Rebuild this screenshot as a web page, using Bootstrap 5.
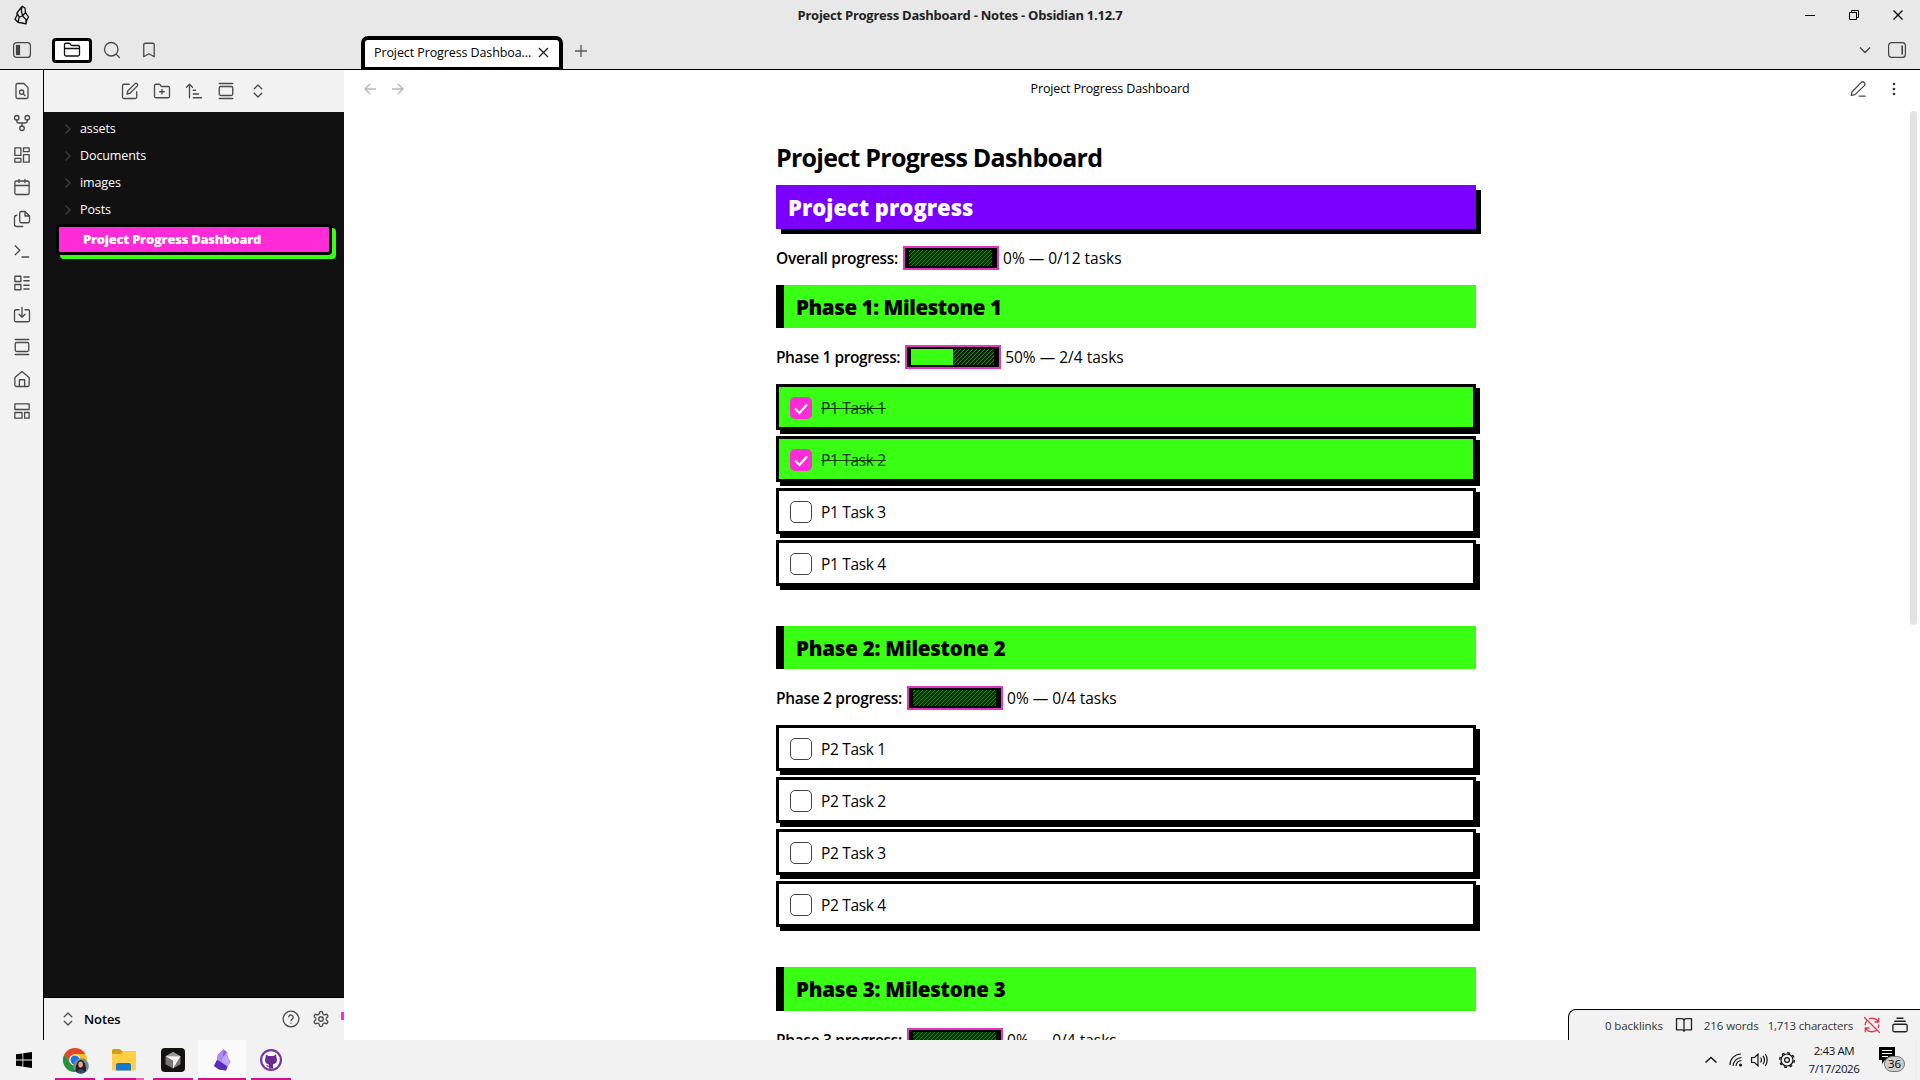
<!DOCTYPE html>
<html lang="en">
<head>
<meta charset="utf-8">
<meta name="viewport" content="width=device-width, initial-scale=1">
<title>Project Progress Dashboard - Notes - Obsidian 1.12.7</title>
<link href="https://cdn.jsdelivr.net/npm/bootstrap@5.3.0/dist/css/bootstrap.min.css" rel="stylesheet">
<style>
:root{--pink:#ff2bd6;--lime:#39ff14;--violet:#7a00ff;--chrome:#e8e8e8;--panel:#f2f2f2}
body{font-family:"Open Sans","Noto Sans",sans-serif;font-size:12.5px;line-height:20px;color:#000;width:1920px;height:1080px;letter-spacing:-.1px}
svg{display:block;flex:none}
.ico{width:18px;height:18px;fill:none;stroke:#4a4a4a;stroke-width:1.75;stroke-linecap:round;stroke-linejoin:round}
.cell32{width:32px;height:32px;display:flex;align-items:center;justify-content:center;flex:none}
.topbar{height:70px;background:var(--chrome);border-bottom:1px solid #000}
.title-row{height:30px}
.title-side{flex:1 1 0;display:flex}
.title-text{font-size:13px;font-weight:700;letter-spacing:-.25px;color:#222;line-height:18px;padding-bottom:1px}
.gem-logo{margin-left:14px}
.win-btn{width:44px;height:28px;display:flex;align-items:center;justify-content:center}
.tabs-row{height:39px}
.left-tabs{width:361px;height:38px;padding-top:2px}
.folder-tab{width:40px;height:25px;border:3px solid #000;border-radius:4px;background:#fff;margin-left:21px}
.doc-tab{width:202px;height:33px;margin-top:6px;border:4px solid #000;border-bottom-width:2px;border-radius:7px 7px 0 0;background:#fff;padding:0 10px 2px 9px}
.ribbon{width:44px;background:var(--panel);border-right:1px solid #000;padding-top:5px}
.side-panel{width:300px;background:#111}
.side-tools{height:42px;background:var(--panel)}
.tree{padding-top:3px;color:#fff}
.tree-row{height:27px;padding-left:18px}
.tree-row svg{width:12px;height:12px;stroke:#3a3a3a;margin-right:6px}
.tree-active{margin:1px 12px 0;height:31px;border:3px solid #000;border-radius:4px;background:var(--pink);box-shadow:4px 4px 0 var(--lime);padding:0 0 1px 24px;font-size:13px;font-weight:800;letter-spacing:-.26px}
.vault{height:43px;background:var(--panel);border-top:1px solid #000;padding-left:15px}
.vault-flag{width:3px;height:8px;background:var(--pink);margin-top:-7px}
.view{background:#fff}
.view-head{height:38px}
.note{width:700px;padding-top:33px;font-size:15.5px;line-height:22px;letter-spacing:-.3px}
.note h1{font-size:25px;font-weight:700;line-height:32px;height:32px;letter-spacing:-.73px;margin:0 0 12px}
.banner{height:44px;line-height:44px;background:var(--violet);color:#fff;box-shadow:5px 5px 0 #000;padding-left:12px;font-size:22px;font-weight:800;letter-spacing:.02px;margin:0 0 17px}
.phase-title{height:43px;line-height:45px;background:var(--lime);border-left:8px solid #000;padding-left:12px;font-size:20.5px;font-weight:800;letter-spacing:-.22px;margin:0 0 17px}
#phase-1 .phase-title{letter-spacing:-.42px}
#phase-1 .prog-label{letter-spacing:-.41px}
#phase-3 .phase-title{height:44px}
.overall{margin-bottom:15px}
.tasks{gap:6px;margin-top:15px}
.prog-row{height:24px}
.prog-row span{padding-bottom:1px}
.prog-label{font-weight:600}
.prog-value{letter-spacing:0}
.meter{width:96px;height:24px;border:2px solid #de38bf;background:#000;padding:2px 5px 2px 4px;margin:0 4px 0 5px}
.meter-track{height:16px;background:repeating-linear-gradient(135deg,#0b3c06 0 1px,#148a08 1px 1.7px,#062304 1.7px 2.83px)}
.meter-fill{height:16px;background:var(--lime)}
.task{height:46px;border:3px solid #000;background:#fff;box-shadow:4px 4px 0 #000;padding-left:11px}
.task.done{background:var(--lime);color:#0c3a05;text-decoration:line-through}
.task-name{padding-top:1px;letter-spacing:-.33px}
.box{width:22px;height:22px;border:1px solid #444;border-radius:5px;background:#fff;margin:2px 9px 0 0;flex:none}
.done .box{border:0;background:var(--pink)}
.phase{margin-bottom:40px}
.thumb{width:7px;height:514px;margin:3px 3px 0 2px;background:#e3e3e3;border-radius:4px}
.statusline{right:0;bottom:0;width:352px;height:31px;background:var(--panel);border:solid #000;border-width:1px 0 0 1px;border-radius:8px 0 0 0;font-size:11.5px;color:#333;padding:1px 0 0 36px}
.statusline .ico{stroke:#222}
.taskbar{height:40px;background:var(--panel)}
.app{width:48px;height:40px;display:flex;align-items:center;justify-content:center;margin-right:1px;position:relative}
.app.open::after{content:"";position:absolute;bottom:0;left:4px;right:4px;height:2px;background:#d6118d}
.app.current{background:#fbfbfb}
.app.current::after{left:0;right:0}
.app.multi::after{background:linear-gradient(90deg,#d6118d 32px,#e569b8 32px)}
.clock{width:68px;font-size:11.5px;line-height:18px;letter-spacing:-.38px;color:#111}
.notice{width:26px;height:26px}
.notice-count{left:5px;top:9px;width:21px;height:16px;border:1px solid #777;border-radius:8px;background:#ccc;font-size:11.5px;line-height:14px}
</style>
<script src="https://cdn.jsdelivr.net/npm/bootstrap@5.3.0/dist/js/bootstrap.bundle.min.js"></script>
</head>
<body class="d-flex flex-column overflow-hidden">
<svg width="0" height="0" class="position-absolute">
  <symbol id="gallery" viewBox="0 0 24 24"><path d="M3 2h18M3 22h18"/><rect x="3" y="6" width="18" height="12" rx="2"/></symbol>
  <symbol id="updown" viewBox="0 0 24 24"><path d="m7 15 5 5 5-5M7 9l5-5 5 5"/></symbol>
  <symbol id="chev" viewBox="0 0 12 12"><path d="m4 2 4 4-4 4"/></symbol>
</svg>

<header class="topbar d-flex flex-column flex-shrink-0">
  <div class="title-row d-flex align-items-center">
    <div class="title-side">
      <svg width="16" height="20" viewBox="0 0 16 20" class="gem-logo" fill="none" stroke="#111" stroke-width="1.3" stroke-linejoin="round"><path d="M8.300 1.200 11 3l.5 4.500 3 4.500-1.600 3-.9 3.900-4-.9-4-.7-3-3 2-4V8l3-4zM8.300 1.200 7.300 5l1.200 6M3 8l2.200 4L4 17.500M5.200 12l3.300-1 3.500 3.500v4.400M11.500 7.500l-3 3.500"/></svg>
    </div>
    <div class="title-text">Project Progress Dashboard - Notes - Obsidian 1.12.7</div>
    <div class="title-side justify-content-end">
      <div class="win-btn"><svg width="10" height="10" stroke="#000"><path d="M0 5.500h10"/></svg></div>
      <div class="win-btn"><svg width="10" height="10" fill="none" stroke="#000"><path d="M.5 2.500h7v7h-7zM2.500 2.500v-2h7v7h-2"/></svg></div>
      <div class="win-btn"><svg width="10" height="10" stroke="#000" stroke-width="1.300"><path d="m.5.5 9 9m0-9-9 9"/></svg></div>
    </div>
  </div>
  <div class="tabs-row d-flex align-items-start">
    <div class="left-tabs d-flex align-items-center">
      <svg width="18" height="16" viewBox="0 0 18 16" fill="none" stroke="#444" stroke-width="1.200" style="margin-left:13px"><rect x=".6" y=".6" width="16.800" height="14.800" rx="3"/><rect x="3.500" y="3.500" width="3" height="9" fill="#444"/></svg>
      <div class="folder-tab d-flex align-items-center justify-content-center"><svg class="ico" style="stroke:#111" viewBox="0 0 24 24"><path d="M4 20h16a2 2 0 0 0 2-2V8a2 2 0 0 0-2-2h-7.900a2 2 0 0 1-1.700-.9l-.8-1.200A2 2 0 0 0 7.900 3H4a2 2 0 0 0-2 2v13a2 2 0 0 0 2 2ZM2 10h20"/></svg></div>
      <div class="cell32 ms-1"><svg class="ico" viewBox="0 0 24 24"><circle cx="11" cy="11" r="9"/><path d="m22 22-4.500-4.500"/></svg></div>
      <div class="cell32" style="margin-left:5px"><svg class="ico" viewBox="0 0 24 24"><path d="m19 21-7-4-7 4V5a2 2 0 0 1 2-2h10a2 2 0 0 1 2 2z"/></svg></div>
    </div>
    <div class="doc-tab d-flex align-items-center justify-content-between">
      <span class="text-nowrap">Project Progress Dashboa...</span>
      <svg width="11" height="11" stroke="#222" stroke-width="1.300"><path d="m1 1 9 9m0-9-9 9"/></svg>
    </div>
    <svg width="12" height="12" stroke="#555" stroke-width="1.300" style="margin:15px 0 0 12px"><path d="M6 0v12M0 6h12"/></svg>
    <div class="ms-auto d-flex align-items-center" style="height:40px;padding-right:14px">
      <svg width="12" height="8" fill="none" stroke="#444" stroke-width="1.400" style="margin-right:17px"><path d="m1 1.500 5 5 5-5"/></svg>
      <svg width="18" height="16" viewBox="0 0 18 16" fill="none" stroke="#444" stroke-width="1.200"><rect x=".6" y=".6" width="16.800" height="14.800" rx="3"/><path d="M14.200 3.500v9" stroke-width="1.600"/></svg>
    </div>
  </div>
</header>

<div class="d-flex flex-fill overflow-hidden" style="min-height:0">
  <nav class="ribbon d-flex flex-column align-items-center flex-shrink-0">
    <div class="cell32"><svg class="ico" viewBox="0 0 24 24"><path d="M14.500 2H6a2 2 0 0 0-2 2v16a2 2 0 0 0 2 2h12a2 2 0 0 0 2-2V7.500L14.500 2Z"/><circle cx="11.500" cy="13.500" r="2.800"/><path d="m13.500 15.500 2.500 2.500"/></svg></div>
    <div class="cell32"><svg class="ico" viewBox="0 0 24 24"><circle cx="12" cy="19" r="3"/><circle cx="5" cy="5" r="3"/><circle cx="19" cy="5" r="3"/><path d="M19 8v1a3 3 0 0 1-3 3H8a3 3 0 0 1-3-3V8M12 12v4"/></svg></div>
    <div class="cell32"><svg class="ico" viewBox="0 0 24 24"><rect x="2.500" y="2.500" width="8" height="10"/><rect x="14" y="2.500" width="7.500" height="5"/><rect x="14" y="11.500" width="7.500" height="10"/><rect x="2.500" y="16.500" width="8" height="5"/></svg></div>
    <div class="cell32"><svg class="ico" viewBox="0 0 24 24"><rect x="2.500" y="4" width="19" height="18" rx="2"/><path d="M16 2v4M8 2v4M3 10h18"/></svg></div>
    <div class="cell32"><svg class="ico" viewBox="0 0 24 24"><path d="M16 2h-5a2 2 0 0 0-2 2v11a2 2 0 0 0 2 2h9a2 2 0 0 0 2-2V8Z"/><path d="M16 2v6h6M5 7a3 3 0 0 0-3 3v9a3 3 0 0 0 3 3h8"/></svg></div>
    <div class="cell32"><svg class="ico" viewBox="0 0 24 24"><path d="m3 17 6-6-6-6M12 20h9"/></svg></div>
    <div class="cell32"><svg class="ico" viewBox="0 0 24 24"><rect x="2.500" y="3" width="8" height="7"/><rect x="2.500" y="14" width="8" height="7"/><path d="M14.500 4h7M14.500 9h7M14.500 15h7M14.500 20h7"/></svg></div>
    <div class="cell32"><svg class="ico" viewBox="0 0 24 24"><path d="M12 2v13M8 11l4 4 4-4M8 5H4a2 2 0 0 0-2 2v12a2 2 0 0 0 2 2h16a2 2 0 0 0 2-2V7a2 2 0 0 0-2-2h-4"/></svg></div>
    <div class="cell32"><svg class="ico"><use href="#gallery"/></svg></div>
    <div class="cell32"><svg class="ico" viewBox="0 0 24 24"><path d="m2.500 10 9.500-8 9.500 8v10a2 2 0 0 1-2 2h-15a2 2 0 0 1-2-2z"/><path d="M8.500 22v-9h7v9"/></svg></div>
    <div class="cell32"><svg class="ico" viewBox="0 0 24 24"><rect x="2.500" y="2.500" width="19" height="7.500"/><rect x="2.500" y="14" width="9.500" height="7.500"/><rect x="15.500" y="14" width="6" height="7.500"/></svg></div>
  </nav>

  <aside class="side-panel d-flex flex-column flex-shrink-0">
    <div class="side-tools d-flex align-items-center justify-content-center">
      <div class="cell32"><svg class="ico" viewBox="0 0 24 24"><path d="M11 3H4a2 2 0 0 0-2 2v15a2 2 0 0 0 2 2h15a2 2 0 0 0 2-2v-7M18.500 2.500a2.100 2.100 0 0 1 3 3L12 15l-4 1 1-4Z"/></svg></div>
      <div class="cell32"><svg class="ico" viewBox="0 0 24 24"><path d="M4 21h16a2 2 0 0 0 2-2V8a2 2 0 0 0-2-2h-7.900a2 2 0 0 1-1.700-.9l-.8-1.200A2 2 0 0 0 7.900 3H4a2 2 0 0 0-2 2v14a2 2 0 0 0 2 2ZM12 10v6M9 13h6"/></svg></div>
      <div class="cell32"><svg class="ico" viewBox="0 0 24 24"><path d="m2 7 4-4 4 4M6 3v18M11 11h3M11 16h7M11 21h11"/></svg></div>
      <div class="cell32"><svg class="ico"><use href="#gallery"/></svg></div>
      <div class="cell32"><svg class="ico"><use href="#updown"/></svg></div>
    </div>
    <div class="tree flex-fill">
      <div class="tree-row d-flex align-items-center"><svg class="ico"><use href="#chev"/></svg>assets</div>
      <div class="tree-row d-flex align-items-center"><svg class="ico"><use href="#chev"/></svg>Documents</div>
      <div class="tree-row d-flex align-items-center"><svg class="ico"><use href="#chev"/></svg>images</div>
      <div class="tree-row d-flex align-items-center"><svg class="ico"><use href="#chev"/></svg>Posts</div>
      <div class="tree-active d-flex align-items-center">Project Progress Dashboard</div>
    </div>
    <div class="vault d-flex align-items-center">
      <svg class="ico"><use href="#updown"/></svg>
      <span class="fw-semibold" style="margin-left:7px;font-size:13px">Notes</span>
      <div class="d-flex ms-auto align-items-center">
        <svg class="ico" viewBox="0 0 24 24" style="margin-right:12px"><circle cx="12" cy="12" r="10.500"/><path d="M9 9a3 3 0 0 1 5.900 1c0 2-2.900 2.500-2.900 4M12 17.500h.01"/></svg>
        <svg class="ico" viewBox="0 0 24 24" style="margin-right:11px"><path d="M12.220 2h-.44a2 2 0 0 0-2 2v.18a2 2 0 0 1-1 1.730l-.43.25a2 2 0 0 1-2 0l-.15-.08a2 2 0 0 0-2.730.73l-.22.38a2 2 0 0 0 .73 2.730l.15.1a2 2 0 0 1 1 1.720v.51a2 2 0 0 1-1 1.740l-.15.09a2 2 0 0 0-.73 2.730l.22.38a2 2 0 0 0 2.730.73l.15-.08a2 2 0 0 1 2 0l.43.25a2 2 0 0 1 1 1.730V20a2 2 0 0 0 2 2h.44a2 2 0 0 0 2-2v-.18a2 2 0 0 1 1-1.730l.43-.25a2 2 0 0 1 2 0l.15.08a2 2 0 0 0 2.730-.73l.22-.39a2 2 0 0 0-.73-2.730l-.15-.08a2 2 0 0 1-1-1.740v-.5a2 2 0 0 1 1-1.740l.15-.09a2 2 0 0 0 .73-2.730l-.22-.38a2 2 0 0 0-2.730-.73l-.15.08a2 2 0 0 1-2 0l-.43-.25a2 2 0 0 1-1-1.730V4a2 2 0 0 0-2-2z"/><circle cx="12" cy="12" r="3"/></svg>
        <div class="vault-flag"></div>
      </div>
    </div>
  </aside>

  <main class="view flex-fill d-flex flex-column position-relative overflow-hidden">
    <div class="view-head d-flex align-items-center flex-shrink-0">
      <div class="d-flex" style="width:300px;padding-left:20px">
        <svg width="12" height="12" fill="none" stroke="#b5b5b5" stroke-width="1.300"><path d="M12 6H1m5-5L1 6l5 5"/></svg>
        <svg width="12" height="12" fill="none" stroke="#b5b5b5" stroke-width="1.300" style="margin-left:16px"><path d="M0 6h11M6 1l5 5-5 5"/></svg>
      </div>
      <div class="flex-fill text-center" style="padding-right:44px;letter-spacing:-.15px">Project Progress Dashboard</div>
      <div class="d-flex justify-content-end" style="width:300px;padding-right:17px">
        <svg class="ico" viewBox="0 0 24 24" style="margin-right:18px"><path d="M3 20.500 4 16 16 3.500a2.800 2.800 0 0 1 4.500 4L8 19.500ZM13.500 21.500h8"/></svg>
        <svg width="18" height="18" fill="#333"><circle cx="9" cy="4" r="1.300"/><circle cx="9" cy="9" r="1.300"/><circle cx="9" cy="14" r="1.300"/></svg>
      </div>
    </div>
    <div class="d-flex flex-fill overflow-hidden">
      <div class="flex-fill d-flex justify-content-center">
        <article class="note" id="note">
          <h1>Project Progress Dashboard</h1>
          <h2 class="banner">Project progress</h2>
        </article>
      </div>
      <div class="thumb flex-shrink-0"></div>
    </div>
    <div class="statusline position-absolute d-flex align-items-center">
      <span>0 backlinks</span>
      <svg class="ico" viewBox="0 0 24 24" style="margin:-2px 0 0 12px"><path d="M12 6v14M2 3.500h7a3 3 0 0 1 3 3 3 3 0 0 1 3-3h7v15h-7a3 3 0 0 0-3 2 3 3 0 0 0-3-2H2Z"/></svg>
      <span style="margin-left:11px">216 words</span>
      <span style="margin-left:9px;letter-spacing:-.2px">1,713 characters</span>
      <svg class="ico" viewBox="0 0 24 24" style="margin:-2px 0 0 10px;stroke:#e93147"><path d="M21 8 18.700 5.400C17 3.800 14.500 3 12 3c-1.200 0-2.300.2-3.400.6M21 3v5h-5M3 12c0-2.200.7-4 2-5.600M3 12M3 16l2.300 2.600C7 20.200 9.500 21 12 21c2 0 4-.6 5.500-1.700M3 21v-5h5M21 12c0 1.200-.2 2.300-.6 3.400M2 2l20 20"/></svg>
      <svg class="ico" viewBox="0 0 24 24" style="margin:-2px 0 0 10px"><path d="M8 3h8M5 7h14"/><rect x="2.500" y="11" width="19" height="10" rx="2"/></svg>
    </div>
  </main>
</div>

<footer class="taskbar d-flex flex-shrink-0">
  <div class="app" style="margin-right:3px"><svg width="16" height="16"><path d="M0 2.300 6.500 1.400v6.200H0zM7.300 1.300 16 0v7.600H7.300zM0 8.400h6.500v6.200L0 13.700zM7.300 8.400H16V16l-8.700-1.300z"/></svg></div>
  <div class="app open"><svg width="28" height="28" viewBox="0 0 28 28"><circle cx="14" cy="14" r="12" fill="#fbc116"/><path d="M3.600 8A12 12 0 0 1 24.400 8H14a6 6 0 0 0-5.200 9z" fill="#ea4335"/><path d="M3.600 8a12 12 0 0 0 10.400 18l5.200-9H8.800z" fill="#229342"/><circle cx="14" cy="14" r="5.600" fill="#fff"/><circle cx="14" cy="14" r="4.500" fill="#1a73e8"/><circle cx="20" cy="20" r="7.800" fill="#6f8d9c"/><path d="M14.500 25.500c0-4 1-11 5-11.500 4 0 5.500 5 5.500 11a7.800 7.800 0 0 1-10.500.5z" fill="#2c1c1e"/><ellipse cx="19.600" cy="18.500" rx="2.300" ry="3" fill="#e4ab93"/><path d="M15.500 26.300c1-4 7-4 8.500-.4a7.800 7.800 0 0 1-8.500.4z" fill="#2d4b74"/></svg></div>
  <div class="app open multi"><svg width="24" height="22" viewBox="0 0 24 22"><path d="M0 1.500Q0 0 1.500 0H8l2.500 2.500H24V8H0z" fill="#d99a14"/><path d="M0 5h9l2-2h13v17.500q0 1-1 1H1q-1 0-1-1z" fill="#ffcf48"/><path d="M4 21.500V16q0-2 2-2h11q2 0 2 2v5.500z" fill="#1479cf"/></svg></div>
  <div class="app open"><svg width="24" height="24"><rect width="24" height="24" rx="4" fill="#14120f"/><path d="m12 4 7.500 4.200v8L12 20.500l-7.500-4.300v-8z" fill="#777"/><path d="M12 4v0l7.500 4.200H4.500z" fill="#999"/><path d="M4.500 8.200h15L12 20.500V12.500z" fill="#f3f3f3"/></svg></div>
  <div class="app open current"><svg width="18" height="22" viewBox="0 0 18 22"><path d="M10.500.5 5 5.500 4 11l-3 6 5 3.500 7 1 1.500-4 3-4.500-3-5.500-.5-4.500z" fill="#8b5cf0"/><path d="M10.500.5 5 5.500 4 11l4 2 2-5z" fill="#a78bfa"/><path d="m10 8-2 5 6.500 4.500 3-4.500-3-5.500-.5-4.500z" fill="#bda6fb"/><path d="m4 11-3 6 5 3.500 7 1 1.500-4L8 13z" fill="#5c2bc0"/></svg></div>
  <div class="app open"><svg width="22" height="22" viewBox="0 0 22 22"><circle cx="11" cy="11" r="11" fill="#7a37a3"/><circle cx="11" cy="11" r="8.800" fill="#fff"/><path d="M6 5.500 8.500 7h5L16 5.500l.5 3.500c1.500 3-.5 6-3.500 6.300v4.300H9v-2c-2 .5-2.500-.5-3.300-1.800 1 .2 1.300 1 3.300.6v-1C6 15 4 12 5.500 9z" fill="#6a2b94"/></svg></div>
  <div class="ms-auto d-flex align-items-center">
    <svg width="12" height="8" fill="none" stroke="#111" stroke-width="1.400"><path d="m.5 6.500 5.500-5 5.500 5"/></svg>
    <svg width="14" height="14" fill="none" stroke="#111" stroke-width="1.100" style="margin-left:12px"><path d="M1 12A11 11 0 0 1 12 1M4 13a9 9 0 0 1 8.500-8.500M7 13a6 6 0 0 1 5.500-5.500"/><circle cx="11.500" cy="12" r="1.500" fill="#111" stroke="none"/></svg>
    <svg width="17" height="14" fill="none" stroke="#111" stroke-width="1.200" style="margin-left:8px"><path d="M.6 4.500h2.900L7 1.200v11.600L3.500 9.500H.6zM9.500 4.500q2 2.500 0 5M12 2.800q3 4.200 0 8.400M14.300 1q3.800 6 0 12"/></svg>
    <svg width="18" height="18" viewBox="0 0 18 18" fill="none" stroke="#111" style="margin-left:10px"><circle cx="9" cy="9" r="6" stroke-width="1.200"/><circle cx="9" cy="9" r="7.300" stroke-width="1.500" stroke-dasharray="2.870 2.870"/><circle cx="9" cy="9" r="2.400" stroke-width="1.200"/></svg>
    <div class="clock text-center" style="margin-left:4px;margin-right:1px">2:43 AM<br>7/17/2026</div>
    <div class="notice position-relative" style="margin-left:10px">
      <svg width="16" height="17"><path d="M0 0h16v13H6l-3 4v-4H0z"/><path d="M3 3.500h10M3 6.500h10M3 9.500h6" stroke="#fff"/></svg>
      <div class="notice-count position-absolute text-center">36</div>
    </div>
    <div class="border-start border-secondary-subtle h-100" style="margin-left:10px;width:5px"></div>
  </div>
</footer>

<script>
const note = document.getElementById('note');
const meter = pct => `<div class="meter"><div class="meter-track"><div class="meter-fill" style="width:${pct}%"></div></div></div>`;
const row = (label, pct, done, total) => `<div class="prog-row d-flex align-items-center"><span class="prog-label">${label}</span>${meter(pct)}<span class="prog-value">${pct}% — ${done}/${total} tasks</span></div>`;
const tick = '<svg width="22" height="22" fill="none" stroke="#fff" stroke-width="2"><path d="m5 11.500 4.500 4.500 7.500-8.500"/></svg>';
let html = `<div class="overall">${row('Overall progress:', 0, 0, 12)}</div>`;
[[1, 2], [2, 0], [3, 0]].forEach(([n, done]) => {
  html += `<section class="phase" id="phase-${n}"><h3 class="phase-title">Phase ${n}: Milestone ${n}</h3>${row(`Phase ${n} progress:`, done * 25, done, 4)}<div class="tasks d-flex flex-column">`;
  for (let t = 1; t <= 4; t++) {
    const d = t <= done;
    html += `<div class="task d-flex align-items-center${d ? ' done' : ''}"><span class="box">${d ? tick : ''}</span><span class="task-name">P${n} Task ${t}</span></div>`;
  }
  html += '</div></section>';
});
note.insertAdjacentHTML('beforeend', html);
</script>
</body>
</html>
